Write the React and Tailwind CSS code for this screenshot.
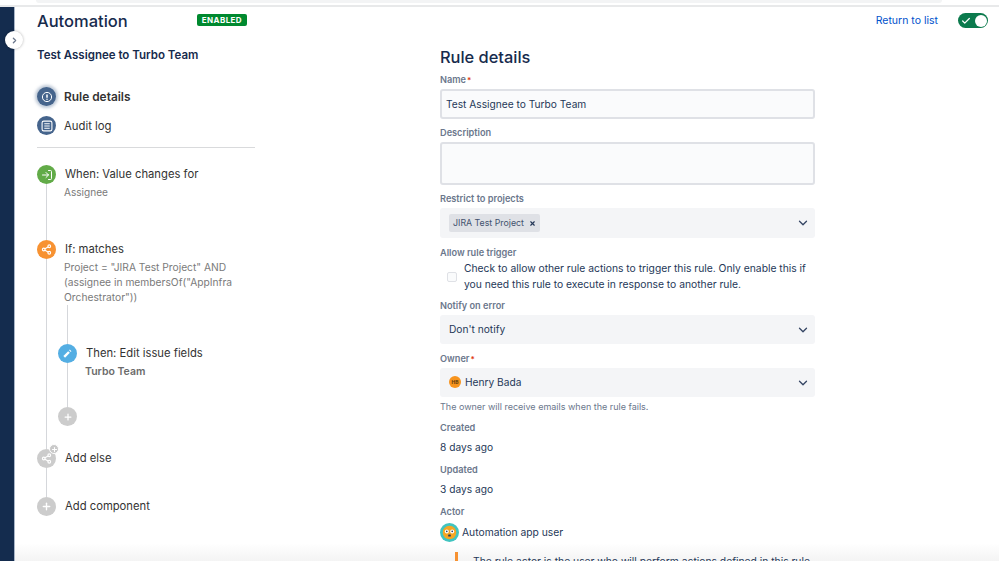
import { ChevronDown, ChevronRight, Check, Plus, X, Share2, LogIn } from "lucide-react";

function Label({ children, required }) {
  return (
    <div className="h-[14px] pt-[2px] text-[9.2px] leading-[12px] font-semibold text-[#6b778c]">
      {children}
      {required && <span className="text-[#de350b] text-[8px] ml-[1px]">*</span>}
    </div>
  );
}

function SelectBox({ children, className }) {
  return (
    <div className={`flex items-center justify-between bg-[#f4f5f7] rounded-[3px] pl-[9px] pr-[5px] mt-[3px] ${className}`}>
      <div className="flex items-center text-[10.2px] text-[#253858]">{children}</div>
      <ChevronDown size={14} strokeWidth={2.2} className="text-[#344563]" />
    </div>
  );
}

function RoundIcon({ color, children }) {
  return (
    <div className={`w-[19px] h-[19px] rounded-full flex items-center justify-center shrink-0 text-white ${color}`}>
      {children}
    </div>
  );
}

function Step({ icon, color, title, lineClass, children }) {
  return (
    <div className="flex">
      <div className="flex flex-col items-center w-[19px] shrink-0">
        <RoundIcon color={color}>{icon}</RoundIcon>
        {lineClass && <div className={`w-[1px] bg-[#d5d7db] ${lineClass}`} />}
      </div>
      <div className="ml-[9px] flex-1 min-w-0">
        <div className="text-[11.25px] leading-[19px] text-[#333]">{title}</div>
        {children}
      </div>
    </div>
  );
}

export default function App() {
  return (
    <div className="relative h-[561px] w-[999px] overflow-hidden bg-white font-['Inter',sans-serif]">
      <div className="absolute inset-x-0 bottom-0 h-[18px] bg-gradient-to-b from-transparent to-[#f4f4f4]" />

      <div className="h-[7px] border-b-2 border-[#e8e9ea]">
        <div className="h-[3px] ml-[36px] w-[906px] bg-[#f3f4f5] rounded-b-lg" />
      </div>

      <div className="relative flex h-[554px]">
        <div className="relative w-[15px] shrink-0 bg-[#142c4e] border-r border-[#a9b6c8]">
          <div className="absolute left-[5px] top-[24px] w-[18px] h-[18px] rounded-full bg-white shadow-[0_0_3px_rgba(0,0,0,0.3)] flex items-center justify-center">
            <ChevronRight size={9} strokeWidth={3.5} className="text-[#6b778c]" />
          </div>
        </div>

        {/* left column */}
        <div className="w-[218px] ml-[22px] shrink-0">
          <div className="flex items-start justify-between w-[210px] pt-[3px] h-[29px]">
            <h1 className="text-[16.5px] leading-[22px] font-medium text-[#172b4d]">Automation</h1>
            <span className="mt-[4px] bg-[#00892f] text-white text-[8px] leading-[12px] font-bold tracking-[0.4px] px-[5px] rounded-[2px]">
              ENABLED
            </span>
          </div>
          <div className="mt-[10px] text-[11.5px] leading-[18px] font-semibold text-[#172b4d]">
            Test Assignee to Turbo Team
          </div>

          <div className="mt-[23px] flex items-center gap-[8px]">
            <div className="w-[19px] h-[19px] rounded-full bg-[#45648c] flex items-center justify-center shadow-[0_0_3px_2px_rgba(69,100,140,0.35)]">
              <svg width="12" height="12" viewBox="0 0 12 12" fill="none" stroke="white" strokeWidth="1">
                <circle cx="6" cy="6" r="4.6" />
                <path d="M6 3.4v3.4" strokeWidth="1.5" />
                <path d="M6 7.8v1" strokeWidth="1.5" />
              </svg>
            </div>
            <span className="text-[11.9px] font-semibold text-[#333]">Rule details</span>
          </div>
          <div className="mt-[10px] flex items-center gap-[8px]">
            <div className="w-[19px] h-[19px] rounded-full bg-[#45648c] flex items-center justify-center">
              <svg width="12" height="12" viewBox="0 0 11 11" fill="none" stroke="white" strokeWidth="1">
                <rect x="1" y="1" width="9" height="9" rx="1.5" />
                <path d="M3 3.5h5M3 5.5h5M3 7.5h5" />
              </svg>
            </div>
            <span className="pt-[1px] text-[11.3px] text-[#333]">Audit log</span>
          </div>
          <div className="mt-[12px] h-[1px] bg-[#d9dadc]" />

          <div className="mt-[17px]">
            <Step
              color="bg-[#62ab48]"
              icon={<LogIn size={12} strokeWidth={2} />}
              title="When: Value changes for"
              lineClass="h-[56px]"
            >
              <div className="text-[10.1px] leading-[15px] mt-[1px] -ml-[1px] text-[#7a7a7a]">Assignee</div>
            </Step>

            <Step
              color="bg-[#f79232]"
              icon={<Share2 size={11} strokeWidth={2.4} />}
              title="If: matches"
              lineClass="h-[190px]"
            >
              <div className="text-[10.25px] leading-[15px] mt-[1px] -ml-[1px] text-[#7a7a7a]">
                Project = "JIRA Test Project" AND (assignee in membersOf("AppInfra Orchestrator"))
              </div>
              <div className="-ml-[7px]">
                <div className="ml-[9px] w-[1px] h-[39px] bg-[#d5d7db]" />
                <Step
                  color="bg-[#54aee3]"
                  icon={
                    <svg width="11" height="11" viewBox="0 0 11 11" fill="none" stroke="white">
                      <path d="M2.2 8.8 7 4" strokeWidth="2.4" />
                      <path d="M7.9 3.1 8.6 2.4" strokeWidth="2.4" />
                    </svg>
                  }
                  title="Then: Edit issue fields"
                  lineClass="h-[44px]"
                >
                  <div className="text-[10.5px] leading-[15px] mt-[1px] -ml-[1px] font-semibold text-[#6b6b6b]">Turbo Team</div>
                </Step>
                <RoundIcon color="bg-[#cccccc]">
                  <Plus size={10} strokeWidth={3} />
                </RoundIcon>
              </div>
            </Step>

            <div className="relative">
              <div className="absolute left-[12px] -top-[5px] w-[10px] h-[10px] rounded-full bg-[#c9c9c9] border border-white flex items-center justify-center text-white">
                <Plus size={7} strokeWidth={3.5} />
              </div>
              <Step
                color="bg-[#cccccc]"
                icon={<Share2 size={11} strokeWidth={2.4} />}
                title="Add else"
                lineClass="h-[29px]"
              />
            </div>
            <Step
              color="bg-[#cccccc]"
              icon={<Plus size={11} strokeWidth={3} />}
              title="Add component"
            />
          </div>
        </div>

        {/* right column */}
        <div className="w-[375px] ml-[185px] shrink-0">
          <h2 className="mt-[38px] text-[16.4px] leading-[24px] font-medium text-[#172b4d]">Rule details</h2>

          <div className="mt-[3px]">
            <Label required>Name</Label>
          </div>
          <div className="mt-[3px] h-[30px] border-2 border-[#dfe1e6] rounded-[3px] bg-[#fafbfc] flex items-center pl-[4px] pt-[1px] text-[10.2px] text-[#253858]">
            Test Assignee to Turbo Team
          </div>

          <div className="mt-[6px]">
            <Label>Description</Label>
          </div>
          <div className="mt-[3px] h-[43px] border-2 border-[#dfe1e6] rounded-[3px] bg-[#fafbfc]" />

          <div className="mt-[6px]">
            <Label>Restrict to projects</Label>
          </div>
          <SelectBox className="h-[30px]">
            <span className="flex items-center h-[18px] bg-[#dfe1e6] rounded-[2px] pl-[4px] pr-[4px] text-[8.8px] text-[#42526e] gap-[5px]">
              JIRA Test Project
              <X size={7} strokeWidth={4} className="text-[#253858]" />
            </span>
          </SelectBox>

          <div className="mt-[7px]">
            <Label>Allow rule trigger</Label>
          </div>
          <div className="flex items-center mt-[2px]">
            <div className="ml-[7px] w-[10px] h-[10px] border-[1.5px] border-[#dfe1e6] rounded-[2px] bg-[#fafbfc] shrink-0" />
            <p className="ml-[7px] text-[10.3px] leading-[15.5px] w-[350px] text-[#253858]">
              Check to allow other rule actions to trigger this rule. Only enable this if you need this rule to execute in response to another rule.
            </p>
          </div>

          <div className="mt-[6px]">
            <Label>Notify on error</Label>
          </div>
          <SelectBox className="h-[29px]">Don't notify</SelectBox>

          <div className="mt-[7px]">
            <Label required>Owner</Label>
          </div>
          <SelectBox className="h-[29px]">
            <span className="w-[12px] h-[12px] rounded-full bg-[#f7941e] mr-[4px] flex items-center justify-center text-[5px] font-bold text-[#5a3a10]">
              HB
            </span>
            Henry Bada
          </SelectBox>
          <div className="mt-[3px] text-[9px] leading-[14px] text-[#6b778c]">The owner will receive emails when the rule fails.</div>

          <div className="mt-[6px]">
            <Label>Created</Label>
          </div>
          <div className="mt-[5px] text-[10.2px] leading-[16px] text-[#253858]">8 days ago</div>
          <div className="mt-[7px]">
            <Label>Updated</Label>
          </div>
          <div className="mt-[5px] text-[10.2px] leading-[16px] text-[#253858]">3 days ago</div>
          <div className="mt-[7px]">
            <Label>Actor</Label>
          </div>
          <div className="mt-[5px] flex items-center gap-[3px] text-[10.3px] text-[#253858]">
            <svg width="19" height="19" viewBox="0 0 19 19" className="shrink-0">
              <circle cx="9.5" cy="9.5" r="9.5" fill="#41c4c0" />
              <circle cx="9.5" cy="9.5" r="6.8" fill="#f5a623" />
              <circle cx="6.8" cy="8.4" r="2" fill="white" />
              <circle cx="12.2" cy="8.4" r="2" fill="white" />
              <circle cx="6.8" cy="8.4" r="0.8" fill="#253858" />
              <circle cx="12.2" cy="8.4" r="0.8" fill="#253858" />
              <rect x="8.2" y="11.6" width="2.6" height="1.8" rx="0.5" fill="#253858" />
            </svg>
            Automation app user
          </div>
          <div className="mt-[10px] ml-[15px] flex">
            <div className="w-[3px] h-[20px] bg-[#f79232] shrink-0" />
            <div className="ml-[15px] mt-[1px] text-[10.3px] leading-[16px] whitespace-nowrap text-[#253858]">
              The rule actor is the user who will perform actions defined in this rule.
            </div>
          </div>
        </div>

        <div className="flex-1 flex items-start justify-end pr-[11px] pt-[4px] gap-[20px]">
          <a className="text-[10.5px] leading-[19px] text-[#0052cc] whitespace-nowrap">Return to list</a>
          <div className="w-[30px] h-[15px] rounded-full bg-[#0b7a4d] flex items-center justify-between pl-[1px] pr-[1.5px] mt-[2px]">
            <Check size={10} strokeWidth={3} className="text-white ml-[2px]" />
            <span className="w-[12px] h-[12px] rounded-full bg-white" />
          </div>
        </div>
      </div>
    </div>
  );
}
